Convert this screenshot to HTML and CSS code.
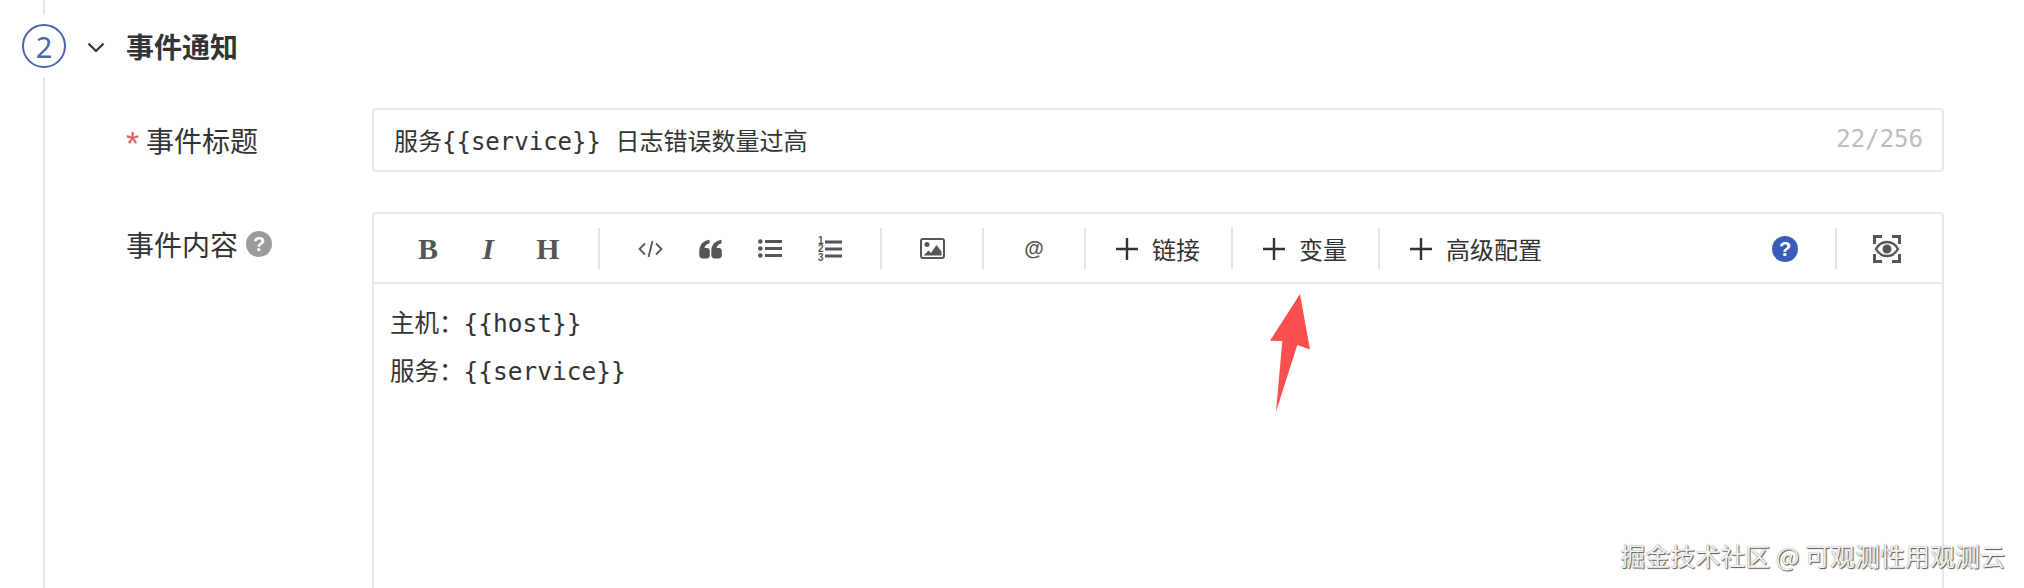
FILE: index.html
```html
<!DOCTYPE html>
<html lang="zh-CN">
<head>
<meta charset="utf-8">
<title>事件通知</title>
<link rel="stylesheet" href="styles.css">
</head>
<body>
<div class="page">
  <div class="rail">
    <span class="rail-top"></span>
    <span class="step-num">2</span>
    <span class="rail-bottom"></span>
  </div>
  <main class="section">
    <header class="section-head">
      <svg class="chevron" viewBox="0 0 18 11" width="18" height="11"><polyline points="1.5,1.5 9,9 16.5,1.5"/></svg>
      <h2 class="section-title">事件通知</h2>
    </header>
    <div class="form-row row-title">
      <label class="form-label"><span class="req">*</span>事件标题</label>
      <div class="input">
        <span class="input-text">服务{{service}} 日志错误数量过高</span>
        <span class="counter">22/256</span>
      </div>
    </div>
    <div class="form-row">
      <label class="form-label label-top">事件内容<span class="q-badge q-gray">?</span></label>
      <div class="editor">
        <div class="toolbar">
          <span class="tool glyph-b">B</span>
          <span class="tool glyph-i">I</span>
          <span class="tool glyph-h">H</span>
          <i class="sep"></i>
          <span class="tool"><svg viewBox="0 0 25 18" width="25" height="18" class="ico-line"><polyline points="7,3.5 1.5,9 7,14.5"/><polyline points="18,3.5 23.5,9 18,14.5"/><line x1="14.5" y1="1" x2="10.5" y2="17"/></svg></span>
          <span class="tool"><svg viewBox="0 0 23 20" width="23" height="20" class="ico-fill"><path d="M10.500 .8C5.500 1.500.6 4.500.3 12v4.300c0 1.800 1.400 3.200 3.200 3.200h4.300c1.800 0 3-1.400 3-3v-4.500c0-1.800-1.300-3-3-3H5.600c.2-2.500 2.300-4 4.900-4.500z"/><path d="M22.500 .8C17.500 1.500 12.600 4.500 12.300 12v4.300c0 1.800 1.400 3.200 3.200 3.200h4.300c1.800 0 3-1.400 3-3v-4.500c0-1.800-1.300-3-3-3h-2.200c.2-2.500 2.300-4 4.900-4.500z"/></svg></span>
          <span class="tool"><svg viewBox="0 0 24 19" width="24" height="19" class="ico-fill"><circle cx="2.300" cy="2.500" r="2.300"/><circle cx="2.300" cy="9.500" r="2.300"/><circle cx="2.300" cy="16.500" r="2.300"/><rect x="7" y="1" width="17" height="3"/><rect x="7" y="8" width="17" height="3"/><rect x="7" y="15" width="17" height="3"/></svg></span>
          <span class="tool"><svg viewBox="0 0 24 25" width="24" height="25" class="ico-fill"><text x="0" y="8" class="ol-num">1</text><text x="0" y="16" class="ol-num">2</text><text x="0" y="24.500" class="ol-num">3</text><rect x="7" y="4.500" width="17" height="3"/><rect x="7" y="11.500" width="17" height="3"/><rect x="7" y="18.500" width="17" height="3"/></svg></span>
          <i class="sep"></i>
          <span class="tool"><svg viewBox="0 0 25 21" width="25" height="21" class="ico-fill"><rect x="1" y="1" width="23" height="19" rx="2" class="img-frame"/><circle cx="7" cy="6.500" r="2.500"/><path d="M3.500 17.500l5-5 2.500 2.500 5.500-8 5 6.500v4z"/></svg></span>
          <i class="sep"></i>
          <span class="tool glyph-at">@</span>
          <i class="sep"></i>
          <button class="add-btn" type="button"><svg viewBox="0 0 22 22" width="22" height="22" class="plus"><path d="M11 0v22M0 11h22"/></svg>链接</button>
          <i class="sep"></i>
          <button class="add-btn" type="button"><svg viewBox="0 0 22 22" width="22" height="22" class="plus"><path d="M11 0v22M0 11h22"/></svg>变量</button>
          <i class="sep"></i>
          <button class="add-btn" type="button"><svg viewBox="0 0 22 22" width="22" height="22" class="plus"><path d="M11 0v22M0 11h22"/></svg>高级配置</button>
          <span class="tool tool-push"><span class="q-badge q-blue">?</span></span>
          <i class="sep"></i>
          <span class="tool"><svg viewBox="0 0 28 28" width="28" height="28" class="ico-eye"><path d="M1.500 9V1.500H9M19 1.500h7.500V9M1.500 19v7.500H9M19 26.500h7.500V19" class="eye-frame"/><path d="M3 14c2.500-4.500 6.500-7 11-7s8.500 2.500 11 7c-2.500 4.500-6.500 7-11 7s-8.500-2.500-11-7z" class="eye-lid"/><circle cx="14" cy="14" r="4.500" class="eye-ball"/></svg></span>
        </div>
        <div class="editor-body">
          <p class="code-line">主机：{{host}}</p>
          <p class="code-line">服务：{{service}}</p>
        </div>
      </div>
    </div>
  </main>
</div>
<svg class="arrow" viewBox="0 0 42 120" width="42" height="120"><polygon points="30,2 40,57.500 27.300,53 6,119.700 12.300,49 0,48.700"/></svg>
<div class="watermark">掘金技术社区 @ 可观测性用观测云</div>
</body>
</html>
```
FILE: styles.css
```css
* { box-sizing: border-box; }
html, body { margin: 0; height: 588px; overflow: hidden; background: #fff; }
body {
  position: relative;
  color: #333;
  font-family: "Noto Sans CJK SC", "Noto Sans", sans-serif;
}
.page { display: flex; height: 588px; padding-left: 22px; }

/* step rail */
.rail { width: 44px; display: flex; flex-direction: column; align-items: center; flex: none; }
.rail-top { width: 2px; height: 15px; background: #e6e6e6; flex: none; }
.rail-bottom { width: 2px; flex: 1; background: #e6e6e6; }
.step-num {
  width: 44px; height: 44px; margin: 9px 0;
  border: 2px solid #4a66ad; border-radius: 50%;
  display: flex; align-items: center; justify-content: center;
  color: #4a66ad; font-size: 29px; line-height: 1; font-family: "Noto Sans", sans-serif; font-weight: 400;
  flex: none;
}

/* section */
.section { flex: none; width: 1878px; padding-left: 60px; }
.section-head { height: 44px; margin-top: 24px; margin-bottom: 40px; display: flex; align-items: center; position: relative; }
.chevron { position: absolute; left: -39px; top: 18px; fill: none; stroke: #333; stroke-width: 2.200; }
.section-title { margin: 0; font-size: 28px; font-weight: 700; color: #333; line-height: 44px; }

.form-row { display: flex; align-items: flex-start; margin-bottom: 40px; }
.form-label { width: 246px; flex: none; display: flex; align-items: center; font-size: 28px; line-height: 40px; color: #333; height: 64px; }
.label-top { height: 64px; }
.req { color: #e0605c; width: 20px; flex: none; font-size: 34px; padding-top: 6px; font-family: "Liberation Sans", sans-serif; }

.input {
  width: 1572px; height: 64px; flex: none;
  border: 2px solid #e8e8e8; border-radius: 4px;
  padding: 0 19px 2px 20px;
  display: flex; align-items: center; justify-content: space-between;
  font-family: "DejaVu Sans Mono", "Noto Sans CJK SC", monospace; font-size: 24px;
}
.counter { color: #bdbdbd; }

/* editor */
.editor { width: 1572px; height: 600px; flex: none; border: 2px solid #e8e8e8; border-radius: 4px; }
.toolbar {
  height: 70px; padding: 14px 25px 0 24px;
  border-bottom: 2px solid #e8e8e8;
  display: flex; align-items: flex-start;
}
.sep { width: 2px; height: 41px; margin: 0 20px; background: #e4e4e4; flex: none; }
.tool { width: 60px; height: 41px; display: flex; align-items: center; justify-content: center; color: #555; flex: none; }
.tool-push { margin-left: auto; }
.glyph-b, .glyph-i, .glyph-h { font-family: "Liberation Serif", serif; font-weight: 700; font-size: 30px; line-height: 1; }
.glyph-i { font-style: italic; }
.glyph-at { font-family: "Liberation Sans", sans-serif; font-weight: 700; font-size: 20px; }
.ico-line { fill: none; stroke: #555; stroke-width: 1.800; }
.ico-fill { fill: #555; }
.ol-num { font-family: "Liberation Sans", sans-serif; font-size: 10px; font-weight: 700; }
.img-frame { fill: none; stroke: #555; stroke-width: 2; }
.eye-frame { fill: none; stroke: #555; stroke-width: 3; }
.eye-lid { fill: none; stroke: #555; stroke-width: 2.400; }
.eye-ball { fill: #555; }

.add-btn {
  height: 41px; padding: 0 11px 0 10px; margin: 0;
  border: 0; background: none; color: #333;
  display: flex; align-items: center; gap: 14px;
  font-family: inherit; font-size: 24px; line-height: 1; flex: none;
}
.plus { fill: none; stroke: #333; stroke-width: 2.400; }

.q-badge {
  width: 26px; height: 26px; border-radius: 50%; flex: none;
  display: inline-flex; align-items: center; justify-content: center;
  color: #fff; font-family: "Liberation Sans", sans-serif; font-weight: 700; font-size: 20px; line-height: 1;
}
.q-gray { background: #9b9b9b; margin-left: 8px; }
.q-blue { background: #3a5cb9; }

.editor-body { padding: 16px 16px; }
.code-line {
  margin: 0; line-height: 48px; font-size: 24.500px; color: #333;
  font-family: "DejaVu Sans Mono", "Noto Sans CJK SC", monospace;
}

/* overlays */
.arrow { position: absolute; left: 1270px; top: 292px; fill: #fa4f4f; }
.watermark {
  position: absolute; right: 19px; top: 537px;
  font-size: 25px; line-height: 36px; color: #f2f2f2;
  font-family: "Noto Sans CJK SC", sans-serif; font-weight: 400;
  text-shadow: 1px 1px 1px #555, 0 0 1px #888;
}
```
